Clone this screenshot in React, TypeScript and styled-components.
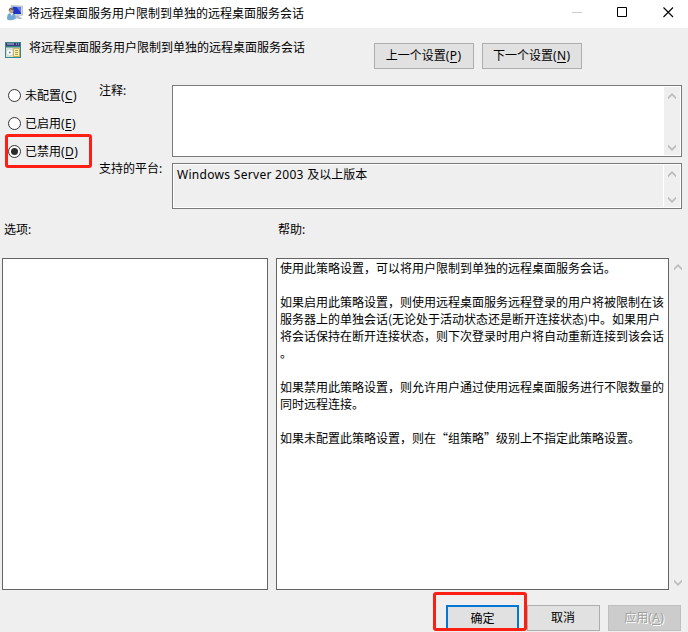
import React from "react";
import styled, { createGlobalStyle, css } from "styled-components";

const Global = createGlobalStyle`
  * { box-sizing: border-box; }
  html, body { margin: 0; padding: 0; overflow: hidden; }
  body {
    background: #efefef;
    color: #000;
    font: 12px/17px "Noto Sans", "Noto Sans CJK SC", sans-serif;
  }
`;

const Dialog = styled.div`
  width: 688px;
  height: 632px;
  background: #efefef;
  overflow: hidden;
  white-space: nowrap;
`;

const TitleBar = styled.header`
  display: flex;
  align-items: center;
  height: 28px;
  padding: 0 14px 2px 7px;
  background: #fff;
  svg { flex: none; }
`;

const TitleText = styled.span`
  margin-left: 5px;
  flex: 1;
`;

const WindowControls = styled.div`
  display: flex;
  align-items: center;
  gap: 35px;
  margin-top: -1px;
  svg { display: block; }
`;

const Heading = styled.section`
  display: flex;
  height: 57px;
  padding: 11px 0 0 5px;
`;

const HeadingIcon = styled.span`
  width: 17px;
  height: 17px;
  margin: 3px 7px 0 0;
  svg { display: block; }
`;

const HeadingText = styled.span`
  width: 345px;
`;

const Button = styled.button<{ $w: number; $default?: boolean }>`
  width: ${(p) => p.$w}px;
  height: 26px;
  padding: 0 1px 1px 0;
  font: inherit;
  color: #000;
  text-align: center;
  background: #e1e1e1;
  border: 1px solid #adadad;
  ${(p) => p.$default && css`
    padding: 0;
    border: 2px solid #0078d7;
  `}
  &:disabled {
    color: #a0a0a0;
    background: #ccc;
    border-color: #bfbfbf;
    text-shadow: 1px 1px #fff;
  }
`;

const NavButtons = styled.div`
  display: flex;
  gap: 8px;
  padding-top: 4px;
`;

const Key = styled.span`
  padding: 0 0.4px;
  text-decoration: underline;
  text-underline-offset: 2px;
  text-decoration-thickness: 1px;
`;

const Settings = styled.section`
  display: grid;
  grid-template-columns: 99px 73px 510px;
  height: 136px;
`;

const Radios = styled.div`
  display: flex;
  flex-direction: column;
  margin-top: -4px;
  padding-left: 8px;
`;

const RadioRow = styled.label`
  position: relative;
  display: flex;
  align-items: center;
  gap: 4px;
  height: 28px;
`;

const Dot = styled.span<{ $on?: boolean }>`
  display: grid;
  place-items: center;
  width: 13px;
  height: 13px;
  border: 1px solid #333;
  border-radius: 50%;
  background: #fff;
  &::after {
    content: "";
    width: 7px;
    height: 7px;
    border-radius: 50%;
    background: ${(p) => (p.$on ? "#2b2b2b" : "transparent")};
  }
`;

const Marker = styled.span<{ $x: number; $y: number; $w: number; $h: number }>`
  position: absolute;
  left: ${(p) => p.$x}px;
  top: ${(p) => p.$y}px;
  width: ${(p) => p.$w}px;
  height: ${(p) => p.$h}px;
  border: 3px solid #fe1f14;
  border-radius: 3px;
  pointer-events: none;
`;

const FieldLabels = styled.div`
  display: grid;
  grid-template-rows: 78px auto;
  line-height: 12px;
`;

const Fields = styled.div`
  display: flex;
  flex-direction: column;
  gap: 6px;
`;

const Field = styled.div<{ $h: number }>`
  display: flex;
  height: ${(p) => p.$h}px;
  padding: 1px;
  border: 1px solid #7a7a7a;
  background: #fff;
`;

const FieldText = styled.div<{ $readOnly?: boolean }>`
  flex: 1;
  padding: 1px 3px;
  background: ${(p) => (p.$readOnly ? "#efefef" : "#fff")};
  margin-right: 1px;
`;

const Latin = styled.span`
  letter-spacing: 0.3px;
`;

const Scroll = styled.div<{ $w: number }>`
  display: flex;
  flex-direction: column;
  justify-content: space-between;
  align-items: center;
  width: ${(p) => p.$w}px;
  padding: 6px 0 4px;
  background: #efefef;
  svg { display: block; }
`;

const PanelLabels = styled.section`
  display: grid;
  grid-template-columns: 274px 1fr;
  height: 37px;
  padding-left: 4px;
`;

const Panels = styled.section`
  display: grid;
  grid-template-columns: 266px 393px 17px;
  column-gap: 8px;
  height: 332px;
  padding-left: 2px;
  & > :last-child { margin-left: -8px; }
`;

const Panel = styled.div`
  border: 1px solid #646464;
  background: #fff;
`;

const HelpText = styled.div`
  padding: 0 3px;
  font-family: "Noto Sans CJK SC", sans-serif;
  p { margin: 0 0 17px; }
`;

const Footer = styled.footer`
  display: flex;
  justify-content: flex-end;
  gap: 8px;
  height: 42px;
  padding: 15px 7px 0 0;
`;

const DefaultSlot = styled.div`
  position: relative;
`;

const Arrow = ({ down }: { down?: boolean }) => (
  <svg width="8" height="7" viewBox="0 0 8 7">
    <path
      d={down ? "M0 .5 4 4.5 8 .5V3L4 7 0 3z" : "M0 6.5 4 2.5 8 6.5V4L4 0 0 4z"}
      fill="#bdbdbd"
    />
  </svg>
);

const ComputerUserIcon = () => (
  <svg width="16" height="16" viewBox="0 0 16 16">
    <path d="M4 .6 15.6 1v9.2L5 10z" fill="#d5dbe2" stroke="#9aa4b5" strokeWidth=".6" />
    <path d="M5.5 1.8 14 2v7L5.5 9z" fill="#1d35cb" />
    <path d="M9.5 1.9 14 2v6z" fill="#5d78ea" />
    <path d="M9 10.4h3.5V12l3 .9-2 1.3-5-1z" fill="#b7bdc6" />
    <path d="M0 14c0-4 1-6 4-6s5 2 5 5c-1 2.5-8 3-9 1z" fill="#71a7d4" />
    <path d="m3 8 2 3 1-3z" fill="#eef5fa" />
    <circle cx="4.2" cy="5.8" r="2.4" fill="#c6a17f" />
    <path d="M1.8 6c-.5-4 4.5-4 5-1-2 0-3-.3-3.6-.8C3 5 2.6 5.6 1.8 6z" fill="#6e6255" />
  </svg>
);

const PolicyIcon = () => (
  <svg width="16" height="16" viewBox="0 0 16 16">
    <path d="M0 0h16v16H0z" fill="#3f8582" />
    <path d="M1 1h14v3H1z" fill="#343b80" />
    <path d="M2 2h7M11 2h1M13 2h1" stroke="#c3cae0" />
    <path d="M1 5h14v10H1z" fill="#d5e2dc" />
    <path d="M1 5.5h14" stroke="#86b0a8" />
    <circle cx="4.8" cy="10.4" r="3.4" fill="#fff" stroke="#b5bdb9" strokeWidth=".6" />
    <circle cx="4.8" cy="10.4" r="1" fill="#648b92" />
    <path d="M8.5 6.5h6v8h-6z" fill="#fff3a6" stroke="#b8a352" strokeWidth=".8" />
    <path d="M10 8.5h3M10 10.5h3M10 12.5h3" stroke="#91844e" strokeWidth=".8" />
  </svg>
);

export default function App() {
  return (
    <>
      <Global />
      <Dialog>
        <TitleBar>
          <ComputerUserIcon />
          <TitleText>将远程桌面服务用户限制到单独的远程桌面服务会话</TitleText>
          <WindowControls>
            <svg width="10" height="11"><path d="M0 5.5h10" stroke="#ccc" /></svg>
            <svg width="11" height="11"><path d="M.5.5h9v9h-9z" fill="none" stroke="#000" /></svg>
            <svg width="11" height="11"><path d="m.5.5 9.5 9.5m0-9.5L.5 10" stroke="#000" strokeWidth="1.1" /></svg>
          </WindowControls>
        </TitleBar>

        <Heading>
          <HeadingIcon><PolicyIcon /></HeadingIcon>
          <HeadingText>将远程桌面服务用户限制到单独的远程桌面服务会话</HeadingText>
          <NavButtons>
            <Button $w={100}>上一个设置(<Key>P</Key>)</Button>
            <Button $w={100}>下一个设置(<Key>N</Key>)</Button>
          </NavButtons>
        </Heading>

        <Settings>
          <Radios>
            <RadioRow><Dot /><span>未配置(<Key>C</Key>)</span></RadioRow>
            <RadioRow><Dot /><span>已启用(<Key>E</Key>)</span></RadioRow>
            <RadioRow>
              <Dot $on /><span>已禁用(<Key>D</Key>)</span>
              <Marker $x={-3} $y={-3} $w={87} $h={34} />
            </RadioRow>
          </Radios>
          <FieldLabels>
            <span>注释:</span>
            <span>支持的平台:</span>
          </FieldLabels>
          <Fields>
            <Field $h={72}>
              <FieldText />
              <Scroll $w={16}><Arrow /><Arrow down /></Scroll>
            </Field>
            <Field $h={46}>
              <FieldText $readOnly><Latin>Windows Server 2003 </Latin>及以上版本</FieldText>
              <Scroll $w={16}><Arrow /><Arrow down /></Scroll>
            </Field>
          </Fields>
        </Settings>

        <PanelLabels>
          <span>选项:</span>
          <span>帮助:</span>
        </PanelLabels>

        <Panels>
          <Panel />
          <Panel>
            <HelpText>
              <p>使用此策略设置，可以将用户限制到单独的远程桌面服务会话。</p>
              <p>
                如果启用此策略设置，则使用远程桌面服务远程登录的用户将被限制在该<br />
                服务器上的单独会话(无论处于活动状态还是断开连接状态)中。如果用户<br />
                将会话保持在断开连接状态，则下次登录时用户将自动重新连接到该会话<br />
                。
              </p>
              <p>
                如果禁用此策略设置，则允许用户通过使用远程桌面服务进行不限数量的<br />
                同时远程连接。
              </p>
              <p>如果未配置此策略设置，则在“组策略”级别上不指定此策略设置。</p>
            </HelpText>
          </Panel>
          <Scroll $w={17}><Arrow /><Arrow down /></Scroll>
        </Panels>

        <Footer>
          <DefaultSlot>
            <Button $w={73} $default>确定</Button>
            <Marker $x={-13} $y={-13} $w={94} $h={39} />
          </DefaultSlot>
          <Button $w={73}>取消</Button>
          <Button $w={73} disabled>应用(<Key>A</Key>)</Button>
        </Footer>
      </Dialog>
    </>
  );
}
